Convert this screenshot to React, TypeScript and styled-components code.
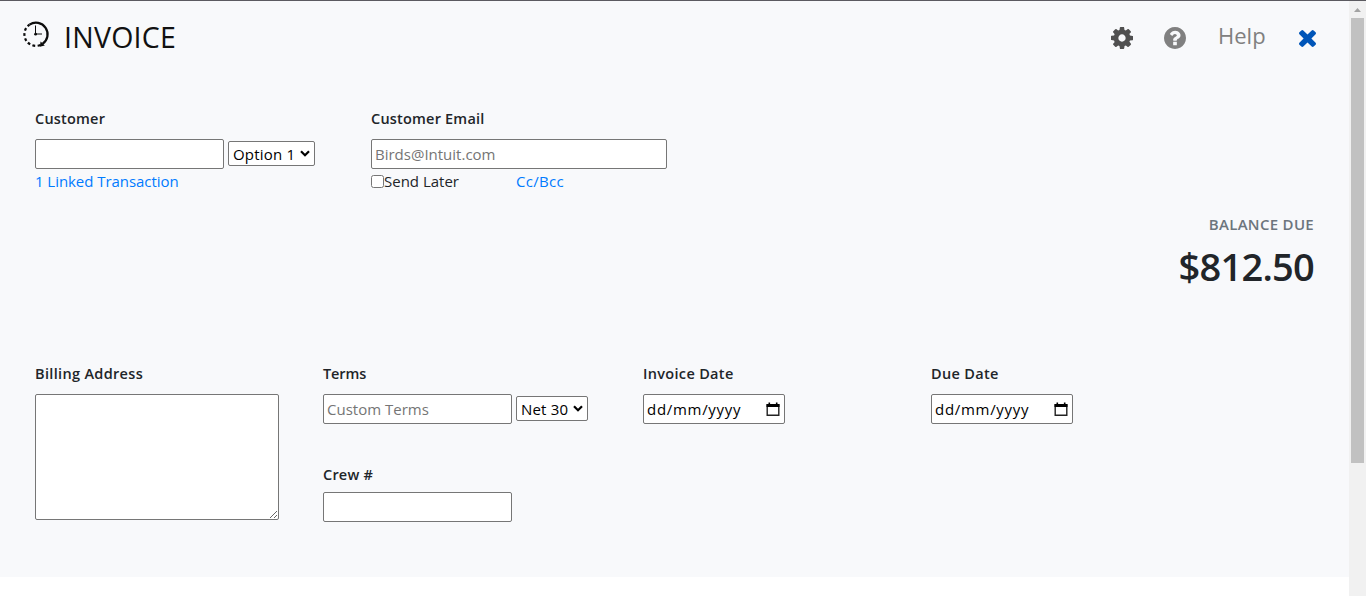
import React from "react";
import styled, { createGlobalStyle } from "styled-components";

const Global = createGlobalStyle`
  * { box-sizing: border-box; }
  body {
    margin: 0;
    overflow: hidden;
    background: #fff;
    color: #212529;
    font-family: "Open Sans", "Noto Sans", sans-serif;
    font-size: 15px;
    line-height: 24px;
  }
`;

const Page = styled.div`
  display: flex;
  height: 596px;
  border-top: 1px solid #5b5a60;
`;

const Invoice = styled.main`
  width: 1349px;
  height: 576px;
  padding: 0 35px 0 35px;
  background: #f8f9fb;
  display: flex;
  flex-direction: column;
`;

const Header = styled.header`
  display: flex;
  align-items: flex-start;
  justify-content: space-between;
  height: 106px;
  margin: 0 -2px 0 -13px;
`;

const Brand = styled.div`
  display: flex;
  gap: 14px;
  padding-top: 19px;
`;

const Title = styled.h1`
  margin: -1px 0 0;
  font-size: 28.5px;
  line-height: 36px;
  font-weight: 400;
  letter-spacing: 0.25px;
  color: #111;
  white-space: nowrap;
`;

const Tools = styled.nav`
  display: flex;
  align-items: flex-start;
`;

const Tool = styled.span<{ $top: number; $gap?: number }>`
  display: flex;
  margin-top: ${(p) => p.$top}px;
  margin-right: ${(p) => p.$gap ?? 0}px;
`;

const Help = styled.span`
  width: 48px;
  margin: 16px 33px 0 0;
  font-size: 22px;
  line-height: 36px;
  color: #808080;
  white-space: nowrap;
`;

const Row = styled.section<{ $height: number }>`
  display: flex;
  align-items: flex-start;
  height: ${(p) => p.$height}px;
`;

const Field = styled.div<{ $width: number }>`
  width: ${(p) => p.$width}px;
  flex: none;
`;

const Label = styled.label<{ $spacing?: number; $gap?: number }>`
  display: block;
  height: 24px;
  margin-bottom: ${(p) => p.$gap ?? 8}px;
  font-weight: 600;
  font-size: 14.5px;
  letter-spacing: ${(p) => p.$spacing ?? 0.2}px;
  white-space: nowrap;
`;

const Controls = styled.div`
  display: flex;
  align-items: center;
  gap: 4px;
`;

const Input = styled.input<{ $width: number }>`
  display: block;
  width: ${(p) => p.$width}px;
  height: 30px;
  padding: 1px 3px;
  border: 1px solid #767676;
  border-radius: 2px;
  background: #fff;
  font: inherit;
  letter-spacing: 0;
  outline: none;
  &::placeholder { color: #757575; opacity: 1; }
`;

const Picker = styled.button<{ $width: number }>`
  display: flex;
  align-items: center;
  justify-content: space-between;
  width: ${(p) => p.$width}px;
  height: 25px;
  margin-top: -1px;
  padding: 1px 4px 0 4px;
  border: 1px solid #767676;
  border-radius: 2px;
  background: #fff;
  color: #000;
  font: inherit;
  letter-spacing: 0.2px;
  white-space: nowrap;
`;

const DateBox = styled.div`
  display: flex;
  align-items: center;
  justify-content: space-between;
  width: 142px;
  height: 30px;
  padding: 1px 4px 0 3px;
  border: 1px solid #767676;
  border-radius: 2px;
  background: #fff;
  color: #000;
`;

const DateText = styled.span`
  margin-top: -1px;
  letter-spacing: 0.7px;
`;

const Address = styled.textarea`
  display: block;
  width: 244px;
  height: 126px;
  border: 1px solid #767676;
  border-radius: 2px;
  background: #fff;
  resize: both;
  outline: none;
`;

const Under = styled.div`
  display: flex;
  align-items: center;
  height: 24px;
`;

const Check = styled.input`
  width: 13px;
  height: 13px;
  margin: 1px 0 0;
`;

const Link = styled.a<{ $spacing?: number }>`
  color: #007bff;
  letter-spacing: ${(p) => p.$spacing ?? 0}px;
  white-space: nowrap;
`;

const SendLater = styled.span`
  width: 132px;
  white-space: nowrap;
`;

const Balance = styled.section`
  display: flex;
  flex-direction: column;
  align-items: flex-end;
  height: 150px;
`;

const BalanceLabel = styled.span`
  margin-top: 1px;
  color: #6c757d;
  font-size: 15px;
  line-height: 22px;
  font-weight: 600;
  letter-spacing: 0.3px;
`;

const Amount = styled.strong`
  margin-top: 7px;
  font-size: 38px;
  line-height: 48px;
  font-weight: 600;
  letter-spacing: -0.75px;
`;

const Scrollbar = styled.aside`
  width: 17px;
  height: 595px;
  padding: 0 2px;
  background: #f1f1f1;
  svg { display: block; }
`;

const Thumb = styled.div`
  width: 13px;
  height: 445px;
  background: #c1c1c1;
`;

const Clock = () => (
  <svg width="28" height="30" viewBox="0 0 28 30" fill="none" stroke="#0c0c0c">
    <circle cx="14" cy="14.3" r="11.6" strokeWidth="2.2" pathLength="360" strokeDasharray="180 180" transform="rotate(-124 14 14.3)" />
    <circle cx="14" cy="14.3" r="11.6" strokeWidth="2.2" pathLength="360" strokeDasharray="0 12 14 12 14 12 14 12 14 12 14 12 14 12 12 180" transform="rotate(56 14 14.3)" />
    <path d="M18.6 21.6l-.8 5.2 5-1.2z" fill="#0c0c0c" stroke="none" />
    <path d="M13.5 5.5V14h6.5" strokeWidth="1" />
    <circle cx="13.6" cy="14.2" r="1.4" fill="#0c0c0c" stroke="none" />
  </svg>
);

const Gear = () => (
  <svg width="22" height="22" viewBox="0 128 1536 1536" fill="#505050">
    <path d="M1024 896q0-106-75-181t-181-75-181 75-75 181 75 181 181 75 181-75 75-181zm512-109v222q0 12-8 23t-20 13l-185 28q-19 54-39 91 35 50 107 138 10 12 10 25t-9 23q-27 37-99 108t-94 71q-12 0-26-9l-138-108q-44 23-91 38-16 136-29 186-7 28-36 28h-222q-14 0-24.5-8.5t-11.5-21.5l-28-184q-49-16-90-37l-141 107q-10 9-25 9-14 0-25-11-126-114-165-168-7-10-7-23 0-12 8-23 15-21 51-66.5t54-70.5q-27-50-41-99l-183-27q-13-2-21-12.5t-8-23.5v-222q0-12 8-23t19-13l186-28q14-46 39-92-40-57-107-138-10-12-10-24 0-10 9-23 26-36 98.5-107.5t94.5-71.5q13 0 26 10l138 107q44-23 91-38 16-136 29-186 7-28 36-28h222q14 0 24.5 8.5t11.5 21.5l28 184q49 16 90 37l142-107q9-9 24-9 13 0 25 10 129 119 165 170 7 8 7 22 0 12-8 23-15 21-51 66.5t-54 70.5q26 50 41 98l183 28q13 2 21 12.5t8 23.5z" />
  </svg>
);

const Question = () => (
  <svg width="22" height="22" viewBox="128 128 1536 1536" fill="#808080">
    <path d="M1024 1376v-192q0-14-9-23t-23-9h-192q-14 0-23 9t-9 23v192q0 14 9 23t23 9h192q14 0 23-9t9-23zm256-672q0-88-55.5-163t-138.5-116-170-41q-243 0-371 213-15 24 8 42l132 100q7 6 19 6 16 0 25-12 53-68 86-92 34-24 86-24 48 0 85.5 26t37.5 59q0 38-20 61t-68 45q-63 28-115.5 86.5t-52.5 125.5v36q0 14 9 23t23 9h192q14 0 23-9t9-23q0-19 21.5-49.5t54.5-49.5q32-18 49-28.5t46-35 44.5-48 28-60.5 12.5-81zm384 192q0 209-103 385.5t-279.5 279.5-385.5 103-385.5-103-279.5-279.5-103-385.5 103-385.5 279.5-279.5 385.5-103 385.5 103 279.5 279.5 103 385.5z" />
  </svg>
);

const Close = () => (
  <svg width="17" height="17" viewBox="302 366 1188 1188" fill="#0055b8">
    <path d="M1490 1322q0 40-28 68l-136 136q-28 28-68 28t-68-28l-294-294-294 294q-28 28-68 28t-68-28l-136-136q-28-28-28-68t28-68l294-294-294-294q-28-28-28-68t28-68l136-136q28-28 68-28t68 28l294 294 294-294q28-28 68-28t68 28l136 136q28 28 28 68t-28 68l-294 294 294 294q28 28 28 68z" />
  </svg>
);

const Chevron = () => (
  <svg width="10" height="8" viewBox="0 0 10 8" fill="none" stroke="#000" strokeWidth="2.2">
    <path d="M1 1.2l4 4 4-4" />
  </svg>
);

const Calendar = () => (
  <svg width="14" height="15" viewBox="0 0 14 15">
    <path d="M1.2 3h11.6v10.3H1.2z" fill="none" stroke="#222" strokeWidth="1.4" />
    <path d="M.5 2h13v3H.5zM2.5.5h1.6V3H2.5zM9.9.5h1.6V3H9.9z" fill="#000" />
  </svg>
);

const DateField = ({ label, width, spacing }: { label: string; width: number; spacing?: number }) => (
  <Field $width={width}>
    <Label $spacing={spacing}>{label}</Label>
    <DateBox>
      <DateText>dd/mm/yyyy</DateText>
      <Calendar />
    </DateBox>
  </Field>
);

export default function App() {
  return (
    <>
      <Global />
      <Page>
        <Invoice>
          <Header>
            <Brand>
              <Clock />
              <Title>INVOICE</Title>
            </Brand>
            <Tools>
              <Tool $top={26} $gap={31}><Gear /></Tool>
              <Tool $top={26} $gap={32}><Question /></Tool>
              <Help>Help</Help>
              <Tool $top={29}><Close /></Tool>
            </Tools>
          </Header>
          <Row $height={105}>
            <Field $width={336}>
              <Label>Customer</Label>
              <Controls>
                <Input $width={189} />
                <Picker $width={87}>Option 1<Chevron /></Picker>
              </Controls>
              <Under><Link $spacing={-0.05}>1 Linked Transaction</Link></Under>
            </Field>
            <Field $width={296}>
              <Label>Customer Email</Label>
              <Input $width={296} placeholder="Birds@Intuit.com" />
              <Under>
                <Check type="checkbox" />
                <SendLater>Send Later</SendLater>
                <Link $spacing={0.3}>Cc/Bcc</Link>
              </Under>
            </Field>
          </Row>
          <Balance>
            <BalanceLabel>BALANCE DUE</BalanceLabel>
            <Amount>$812.50</Amount>
          </Balance>
          <Row $height={200}>
            <Field $width={288}>
              <Label $spacing={0.33}>Billing Address</Label>
              <Address />
            </Field>
            <Field $width={320}>
              <Label $spacing={-0.1}>Terms</Label>
              <Controls>
                <Input $width={189} placeholder="Custom Terms" />
                <Picker $width={72}>Net 30<Chevron /></Picker>
              </Controls>
              <Row $height={39} />
              <Label $gap={5}>Crew #</Label>
              <Input $width={189} />
            </Field>
            <DateField label="Invoice Date" width={288} spacing={0.32} />
            <DateField label="Due Date" width={142} spacing={0.32} />
          </Row>
        </Invoice>
        <Scrollbar>
          <svg width="13" height="17" viewBox="0 0 13 17" fill="#a3a3a3">
            <path d="M3 11l3.5-4 3.5 4z" />
          </svg>
          <Thumb />
        </Scrollbar>
      </Page>
    </>
  );
}
